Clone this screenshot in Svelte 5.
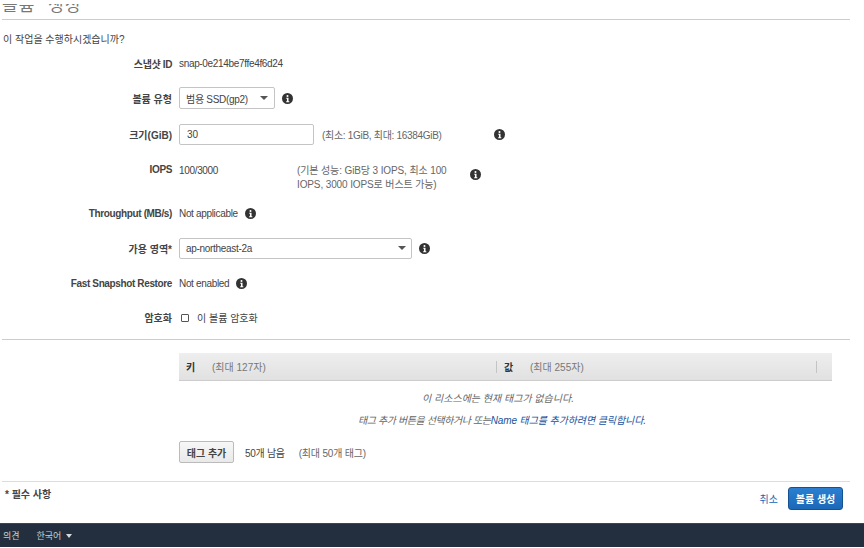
<script>
  const info = 'M7 0a7 7 0 1 0 0 14A7 7 0 0 0 7 0zM7 2.6a1.3 1.3 0 1 1 0 2.6 1.3 1.3 0 0 1 0-2.6zM5.4 6.2h2.9v4.3h1v1.2H5.3v-1.2h1V7.4h-.9z';
</script>

{#snippet infoIcon()}
  <svg class="info" width="11" height="11" viewBox="0 0 14 14"><path fill-rule="evenodd" d={info} /></svg>
{/snippet}

<div class="page">
  <header class="title"><h1>볼륨 생성</h1></header>

  <p class="question">이 작업을 수행하시겠습니까?</p>

  <div class="form">
    <div class="row r-id">
      <span class="label latin">스냅샷 ID</span>
      <span class="value">snap-0e214be7ffe4f6d24</span>
    </div>

    <div class="row r-type">
      <span class="label">볼륨 유형</span>
      <div class="select type-select"><span class="narrow">범용 SSD(gp2)</span><i class="caret"></i></div>
      <span>{@render infoIcon()}</span>
    </div>

    <div class="row r-size">
      <span class="label">크기(GiB)</span>
      <div class="input">30</div>
      <span class="hint size-hint">(최소: 1GiB, 최대: 16384GiB)</span>
      <span class="size-info">{@render infoIcon()}</span>
    </div>

    <div class="row r-iops">
      <span class="label latin">IOPS</span>
      <span class="value iops-value">100/3000</span>
      <span class="hint iops-hint">(기본 성능: GiB당 3 IOPS, 최소 100 IOPS, 3000 IOPS로 버스트 가능)</span>
      <span class="iops-info">{@render infoIcon()}</span>
    </div>

    <div class="row r-through">
      <span class="label latin">Throughput (MB/s)</span>
      <span class="value">Not applicable</span>
      <span>{@render infoIcon()}</span>
    </div>

    <div class="row r-zone">
      <span class="label">가용 영역*</span>
      <div class="select zone-select"><span class="narrow">ap-northeast-2a</span><i class="caret"></i></div>
      <span>{@render infoIcon()}</span>
    </div>

    <div class="row r-fast">
      <span class="label latin">Fast Snapshot Restore</span>
      <span class="value">Not enabled</span>
      <span>{@render infoIcon()}</span>
    </div>

    <div class="row r-enc">
      <span class="label">암호화</span>
      <label class="check"><input type="checkbox" />이 볼륨 암호화</label>
    </div>
  </div>

  <hr class="rule-top" />

  <section class="tags">
    <div class="tag-head">
      <div class="col col-key"><b>키</b><span>(최대 127자)</span></div>
      <div class="col col-val"><b>값</b><span>(최대 255자)</span></div>
    </div>
    <div class="tag-empty">
      <p class="line-one">이 리소스에는 현재 태그가 없습니다.</p>
      <p class="line-two">태그 추가 버튼을 선택하거나 또는<a href="#name">Name 태그를 추가하려면 클릭합니다.</a></p>
    </div>
    <div class="tag-actions">
      <button class="btn">태그 추가</button>
      <span class="left">50개 남음</span>
      <span class="hint">(최대 50개 태그)</span>
    </div>
  </section>

  <hr class="rule-bottom" />

  <div class="actions">
    <span class="required">* 필수 사항</span>
    <div class="buttons">
      <a href="#cancel" class="cancel">취소</a>
      <button class="btn primary">볼륨 생성</button>
    </div>
  </div>

  <footer>
    <span>의견</span>
    <span class="lang">한국어<i class="caret light"></i></span>
  </footer>
</div>

<style>
  :global(body) {
    margin: 0;
    background: #fff;
  }
  .page {
    width: 864px;
    height: 548px;
    overflow: hidden;
    font-family: "Liberation Sans", "Noto Sans CJK KR", sans-serif;
    font-size: 10px;
    color: #444;
  }
  /* the page is scrolled, only the lower half of the heading shows */
  .title {
    height: 20px;
    box-sizing: border-box;
    padding: 4px 0 5px;
    margin: 0 14px 0 2px;
    border-bottom: 1px solid #ccc;
  }
  h1 {
    margin: 0;
    height: 10px;
    overflow: hidden;
    display: flex;
    align-items: flex-end;
    font-size: 17px;
    font-weight: 400;
    line-height: 17px;
    color: #777;
    letter-spacing: 1px;
    word-spacing: 7px;
  }
  .question {
    margin: 13px 0 0 3px;
    line-height: 13px;
    height: 13px;
    color: #444;
  }
  .form {
    margin-top: 9px;
  }
  .row {
    display: grid;
    grid-template-columns: 172px auto auto auto 1fr;
    column-gap: 7px;
    align-items: center;
    justify-items: start;
  }
  .r-id { height: 16px; }
  .r-type { height: 22px; margin-top: 16px; }
  .r-size { height: 21px; margin-top: 15px; }
  .r-iops { height: 28px; margin-top: 19px; align-items: start; }
  .r-through { height: 14px; margin-top: 14px; }
  .r-zone { height: 22px; margin-top: 17px; }
  .r-fast { height: 14px; margin-top: 17px; }
  .r-enc { height: 14px; margin-top: 20px; }

  .label {
    justify-self: end;
    font-weight: 700;
    color: #444;
    white-space: nowrap;
  }
  .latin {
    letter-spacing: -0.37px;
  }
  .value {
    color: #444;
    white-space: nowrap;
    letter-spacing: -0.33px;
  }
  .narrow {
    letter-spacing: -0.3px;
  }
  .hint {
    color: #666;
  }
  .select, .input {
    box-sizing: border-box;
    border: 1px solid #c4c4c4;
    border-radius: 2px;
    background: #fff;
    display: flex;
    align-items: center;
    justify-content: space-between;
    color: #444;
  }
  .type-select {
    width: 96px;
    height: 22px;
    padding: 0 6px;
  }
  .zone-select {
    width: 233px;
    height: 21px;
    padding: 0 5px 0 6px;
  }
  .input {
    width: 135px;
    height: 21px;
    padding: 0 7px;
  }
  .caret {
    width: 0;
    height: 0;
    border-left: 4px solid transparent;
    border-right: 4px solid transparent;
    border-top: 4px solid #555;
  }
  .caret.light {
    border-left-width: 3px;
    border-right-width: 3px;
    border-top-color: #d5dbdb;
    margin-left: 5px;
  }
  .info {
    display: block;
    fill: #333;
  }
  .size-hint {
    margin-left: 1px;
    white-space: nowrap;
    letter-spacing: -0.3px;
  }
  .size-info { margin-left: 45px; }
  .iops-value { width: 111px; line-height: 14px; }
  .iops-hint {
    grid-column: 3;
    width: 166px;
    line-height: 14px;
    letter-spacing: -0.12px;
  }
  .iops-info { margin-top: 5px; }
  .check {
    display: flex;
    align-items: center;
    color: #444;
    margin-left: 2px;
  }
  .check input {
    width: 6px;
    height: 6px;
    margin: 0 8px 0 0;
    appearance: none;
    border: 1px solid #555;
    border-radius: 1px;
    background: #fff;
    box-sizing: content-box;
  }

  hr {
    border: 0;
    margin: 0 14px 0 2px;
    height: 1px;
  }
  .rule-top {
    background: #ccc;
    margin-top: 15px;
  }
  .rule-bottom {
    background: #ddd;
    margin-top: 18px;
  }

  .tags {
    margin: 13px 32px 0 179px;
  }
  .tag-head {
    height: 27px;
    background: linear-gradient(#eee, #e1e1e1);
    border-bottom: 1px solid #ccc;
    display: flex;
    align-items: center;
  }
  .col {
    display: flex;
    align-items: center;
    height: 12px;
    padding-left: 7px;
    box-sizing: border-box;
  }
  .col b {
    color: #333;
    width: 26px;
  }
  .col span {
    color: #777;
  }
  .col-key { width: 317px; }
  .col-val {
    width: 321px;
    border-left: 1px solid #c4c4c4;
    border-right: 1px solid #c4c4c4;
  }
  .col-val b { width: 26px; }
  .tag-empty {
    text-align: center;
    font-style: italic;
    color: #666;
  }
  .tag-empty p {
    line-height: 13px;
  }
  .line-one {
    margin: 11px 0 0;
    padding-right: 15px;
  }
  .line-two {
    margin: 9px 0 0;
    padding-right: 7px;
    letter-spacing: -0.41px;
  }
  .tag-empty a {
    color: #16529c;
    text-decoration: none;
    letter-spacing: -0.1px;
  }
  .tag-actions {
    margin-top: 14px;
    display: flex;
    align-items: center;
    height: 22px;
  }
  .left {
    color: #444;
    margin-left: 11px;
    margin-right: 14px;
    letter-spacing: -0.3px;
  }
  .tag-actions .hint {
    letter-spacing: -0.2px;
  }
  .btn {
    font: inherit;
    font-weight: 700;
    height: 22px;
    padding: 0;
    width: 55px;
    color: #444;
    border: 1px solid #bbb;
    border-radius: 2px;
    background: linear-gradient(#f7f7f7, #e9e9e9);
  }
  .actions {
    display: flex;
    justify-content: space-between;
    margin: 5px 21px 13px 5px;
    height: 23px;
  }
  .required {
    font-weight: 700;
    color: #444;
    line-height: 13px;
    margin-top: 1px;
  }
  .buttons {
    display: flex;
    align-items: center;
    gap: 10px;
  }
  .cancel {
    color: #1166bb;
    text-decoration: none;
  }
  .btn.primary {
    height: 23px;
    color: #fff;
    border: 1px solid #15528f;
    background: linear-gradient(#2c7fd0, #1b68b9);
    border-radius: 3px;
  }
  footer {
    height: 23px;
    background: #232f3e;
    border-top: 1px solid #3c4650;
    display: flex;
    align-items: center;
    gap: 17px;
    padding-left: 3px;
    font-size: 9px;
    color: #c8cfcf;
  }
  .lang {
    display: flex;
    align-items: center;
  }
</style>
